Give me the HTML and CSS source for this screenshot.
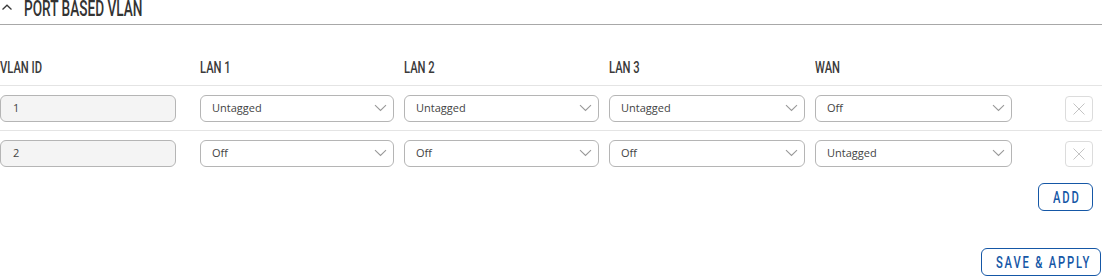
FILE: index.html
```html
<!DOCTYPE html>
<html lang="en">
<head>
<meta charset="utf-8">
<title>Port based VLAN</title>
<link rel="stylesheet" href="styles.css">
</head>
<body>
<section class="panel">
  <h2 class="panel-title">
    <svg class="collapse-icon" width="12" height="7" viewBox="0 0 12 7"><path d="M1.5 5.5 L6 1.2 L10.5 5.5" fill="none" stroke="#3a3a3a" stroke-width="1.3"/></svg>
    <span class="cond">PORT BASED VLAN</span>
  </h2>

  <div class="vtable">
    <div class="vrow head">
      <div class="cell"><span class="cond">VLAN ID</span></div>
      <div class="cell"><span class="cond">LAN 1</span></div>
      <div class="cell"><span class="cond">LAN 2</span></div>
      <div class="cell"><span class="cond">LAN 3</span></div>
      <div class="cell wan"><span class="cond">WAN</span></div>
      <div class="cell spacer"></div>
      <div class="cell act"></div>
    </div>

    <div class="vrow sep">
      <div class="cell"><input class="field id" type="text" value="1"></div>
      <div class="cell"><div class="sel"><select><option selected>Untagged</option><option>Tagged</option><option>Off</option></select><svg class="chev" width="13" height="8" viewBox="0 0 13 8"><path d="M1 1.2 L6.5 6.5 L12 1.2" fill="none" stroke="#999" stroke-width="1.1"/></svg></div></div>
      <div class="cell"><div class="sel"><select><option selected>Untagged</option><option>Tagged</option><option>Off</option></select><svg class="chev" width="13" height="8" viewBox="0 0 13 8"><path d="M1 1.2 L6.5 6.5 L12 1.2" fill="none" stroke="#999" stroke-width="1.1"/></svg></div></div>
      <div class="cell"><div class="sel"><select><option selected>Untagged</option><option>Tagged</option><option>Off</option></select><svg class="chev" width="13" height="8" viewBox="0 0 13 8"><path d="M1 1.2 L6.5 6.5 L12 1.2" fill="none" stroke="#999" stroke-width="1.1"/></svg></div></div>
      <div class="cell wan"><div class="sel"><select><option>Untagged</option><option>Tagged</option><option selected>Off</option></select><svg class="chev" width="13" height="8" viewBox="0 0 13 8"><path d="M1 1.2 L6.5 6.5 L12 1.2" fill="none" stroke="#999" stroke-width="1.1"/></svg></div></div>
      <div class="cell spacer"></div>
      <div class="cell act"><button class="del" type="button" aria-label="Delete"><svg width="14" height="14" viewBox="0 0 14 14"><path d="M1.5 1.5 L12.5 12.5 M12.5 1.5 L1.5 12.5" stroke="#c4c4c4" stroke-width="1"/></svg></button></div>
    </div>

    <div class="vrow">
      <div class="cell"><input class="field id" type="text" value="2"></div>
      <div class="cell"><div class="sel"><select><option>Untagged</option><option>Tagged</option><option selected>Off</option></select><svg class="chev" width="13" height="8" viewBox="0 0 13 8"><path d="M1 1.2 L6.5 6.5 L12 1.2" fill="none" stroke="#999" stroke-width="1.1"/></svg></div></div>
      <div class="cell"><div class="sel"><select><option>Untagged</option><option>Tagged</option><option selected>Off</option></select><svg class="chev" width="13" height="8" viewBox="0 0 13 8"><path d="M1 1.2 L6.5 6.5 L12 1.2" fill="none" stroke="#999" stroke-width="1.1"/></svg></div></div>
      <div class="cell"><div class="sel"><select><option>Untagged</option><option>Tagged</option><option selected>Off</option></select><svg class="chev" width="13" height="8" viewBox="0 0 13 8"><path d="M1 1.2 L6.5 6.5 L12 1.2" fill="none" stroke="#999" stroke-width="1.1"/></svg></div></div>
      <div class="cell wan"><div class="sel"><select><option selected>Untagged</option><option>Tagged</option><option>Off</option></select><svg class="chev" width="13" height="8" viewBox="0 0 13 8"><path d="M1 1.2 L6.5 6.5 L12 1.2" fill="none" stroke="#999" stroke-width="1.1"/></svg></div></div>
      <div class="cell spacer"></div>
      <div class="cell act"><button class="del" type="button" aria-label="Delete"><svg width="14" height="14" viewBox="0 0 14 14"><path d="M1.5 1.5 L12.5 12.5 M12.5 1.5 L1.5 12.5" stroke="#c4c4c4" stroke-width="1"/></svg></button></div>
    </div>
  </div>

  <div class="add-row">
    <button class="btn add" type="button"><span class="cond">ADD</span></button>
  </div>
  <div class="save-row">
    <button class="btn save" type="button"><span class="cond">SAVE &amp; APPLY</span></button>
  </div>
</section>
</body>
</html>
```

FILE: styles.css
```css
html, body {
  margin: 0;
  padding: 0;
  background: #fff;
}
body {
  font-family: "Open Sans", "Liberation Sans", sans-serif;
  color: #444;
  width: 1102px;
  height: 276px;
  overflow: hidden;
}
.cond {
  display: inline-block;
  font-family: Roboto, "Liberation Sans", sans-serif;
  font-weight: 500;
  transform: scaleX(0.7);
  transform-origin: left center;
  white-space: nowrap;
}
.panel-title {
  margin: 0;
  display: flex;
  align-items: center;
  gap: 11px;
  font-size: 22px;
  font-weight: normal;
  line-height: 16px;
  height: 16px;
  padding: 0 0 8px 1px;
  border-bottom: 1px solid #a8a8a8;
  color: #333;
}
.panel-title .cond {
  transform: scaleX(0.62);
  margin-top: 1px;
}
.collapse-icon {
  flex: none;
  margin-top: -1px;
}
.vtable {
  margin-top: 32px;
}
.vrow {
  display: grid;
  grid-template-columns: 200px 204px 205px 206px 197px 1fr 28px;
  align-items: center;
  padding: 9px 9px 8px 0;
}
.vrow.head {
  padding: 0 9px 7px 0;
  font-size: 16px;
  line-height: 20px;
  color: #3a3a3a;
  border-bottom: 1px solid #e4e4e4;
}
.vrow.sep {
  border-bottom: 1px solid #e4e4e4;
}
.cell {
  padding-right: 10px;
  min-width: 0;
}
.cell:first-child {
  padding-right: 24px;
}
.cell.wan, .cell.spacer, .cell.act {
  padding-right: 0;
}
.field, .sel select {
  box-sizing: border-box;
  width: 100%;
  height: 27px;
  margin: 0;
  border: 1px solid #b5b5b5;
  border-radius: 6px;
  font-family: "Open Sans", "Liberation Sans", sans-serif;
  font-size: 11px;
  color: #444;
  padding: 0 12px 2px;
  outline: none;
}
.field.id {
  background: #f4f4f4;
}
.sel {
  position: relative;
}
.sel select {
  appearance: none;
  -webkit-appearance: none;
  background: #fff;
  padding: 0 30px 2px 11px;
}
.chev {
  position: absolute;
  right: 7px;
  top: 9px;
  pointer-events: none;
}
.del {
  box-sizing: border-box;
  width: 28px;
  height: 26px;
  margin: 0;
  padding: 0;
  border: 1px solid #dcdcdc;
  border-radius: 4px;
  background: #fff;
  display: flex;
  align-items: center;
  justify-content: center;
}
.add-row {
  display: flex;
  justify-content: flex-end;
  padding-right: 9px;
  margin-top: 8px;
}
.save-row {
  display: flex;
  justify-content: flex-end;
  padding-right: 1px;
  margin-top: 37px;
}
.btn {
  box-sizing: border-box;
  height: 28px;
  margin: 0;
  border: 1px solid #1557a6;
  border-radius: 6px;
  background: #fff;
  color: #1557a6;
  font-size: 16px;
  letter-spacing: 2.6px;
  display: flex;
  align-items: center;
  justify-content: flex-start;
  overflow: hidden;
}
.btn.add {
  width: 55px;
  padding-left: 14px;
}
.btn.save {
  width: 120px;
  padding-left: 14px;
}
```
